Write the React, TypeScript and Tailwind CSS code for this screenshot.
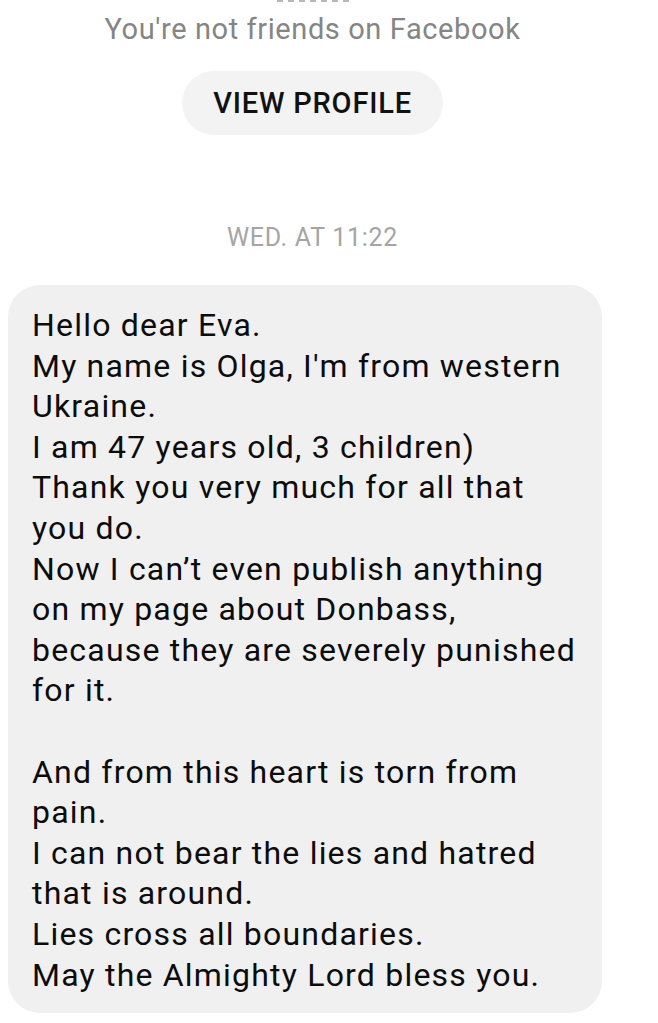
export default function App() {
  const lines = [
    'Hello dear Eva.',
    "My name is Olga, I'm from western",
    'Ukraine.',
    'I am 47 years old, 3 children)',
    'Thank you very much for all that',
    'you do.',
    'Now I can’t even publish anything',
    'on my page about Donbass,',
    'because they are severely punished',
    'for it.',
    '',
    'And from this heart is torn from',
    'pain.',
    'I can not bear the lies and hatred',
    'that is around.',
    'Lies cross all boundaries.',
    'May the Almighty Lord bless you.',
  ];

  return (
    <div className="w-[658px] h-[1023px] bg-white overflow-hidden font-['Roboto',sans-serif]">
      <div className="w-[625px] flex flex-col items-center">
        {/* clipped name row */}
        <div className="h-[4px] overflow-hidden flex gap-[5px] -mt-[2px]">
          {[0, 1, 2, 3, 4, 5, 6].map((i) => (
            <span key={i} className="w-[6px] h-[6px] rounded-full bg-[#b8b8b8] block" />
          ))}
        </div>

        <p className="mt-[10px] text-[29px] leading-[34px] tracking-[0.6px] text-[#858585]">
          You're not friends on Facebook
        </p>

        <button className="mt-[25px] w-[261px] h-[64px] rounded-full bg-[#f3f3f3] text-[29px] leading-[34px] font-medium tracking-[0.8px] text-[#111]">
          VIEW PROFILE
        </button>

        <p className="mt-[88px] text-[25px] leading-[30px] tracking-[0.7px] text-[#a5a5a5]">WED. AT 11:22</p>
      </div>

      <div className="ml-[8px] mt-[32px] w-[594px] rounded-[32px] bg-[#f0f0f0] pl-[24px] pr-[12px] pt-[20px] pb-[18px]">
        {lines.map((l, i) => (
          <div key={i} className="text-[32px] leading-[40.6px] h-[40.6px] tracking-[1.2px] text-[#0c0c0c] whitespace-nowrap">
            {l}
          </div>
        ))}
      </div>
    </div>
  );
}
